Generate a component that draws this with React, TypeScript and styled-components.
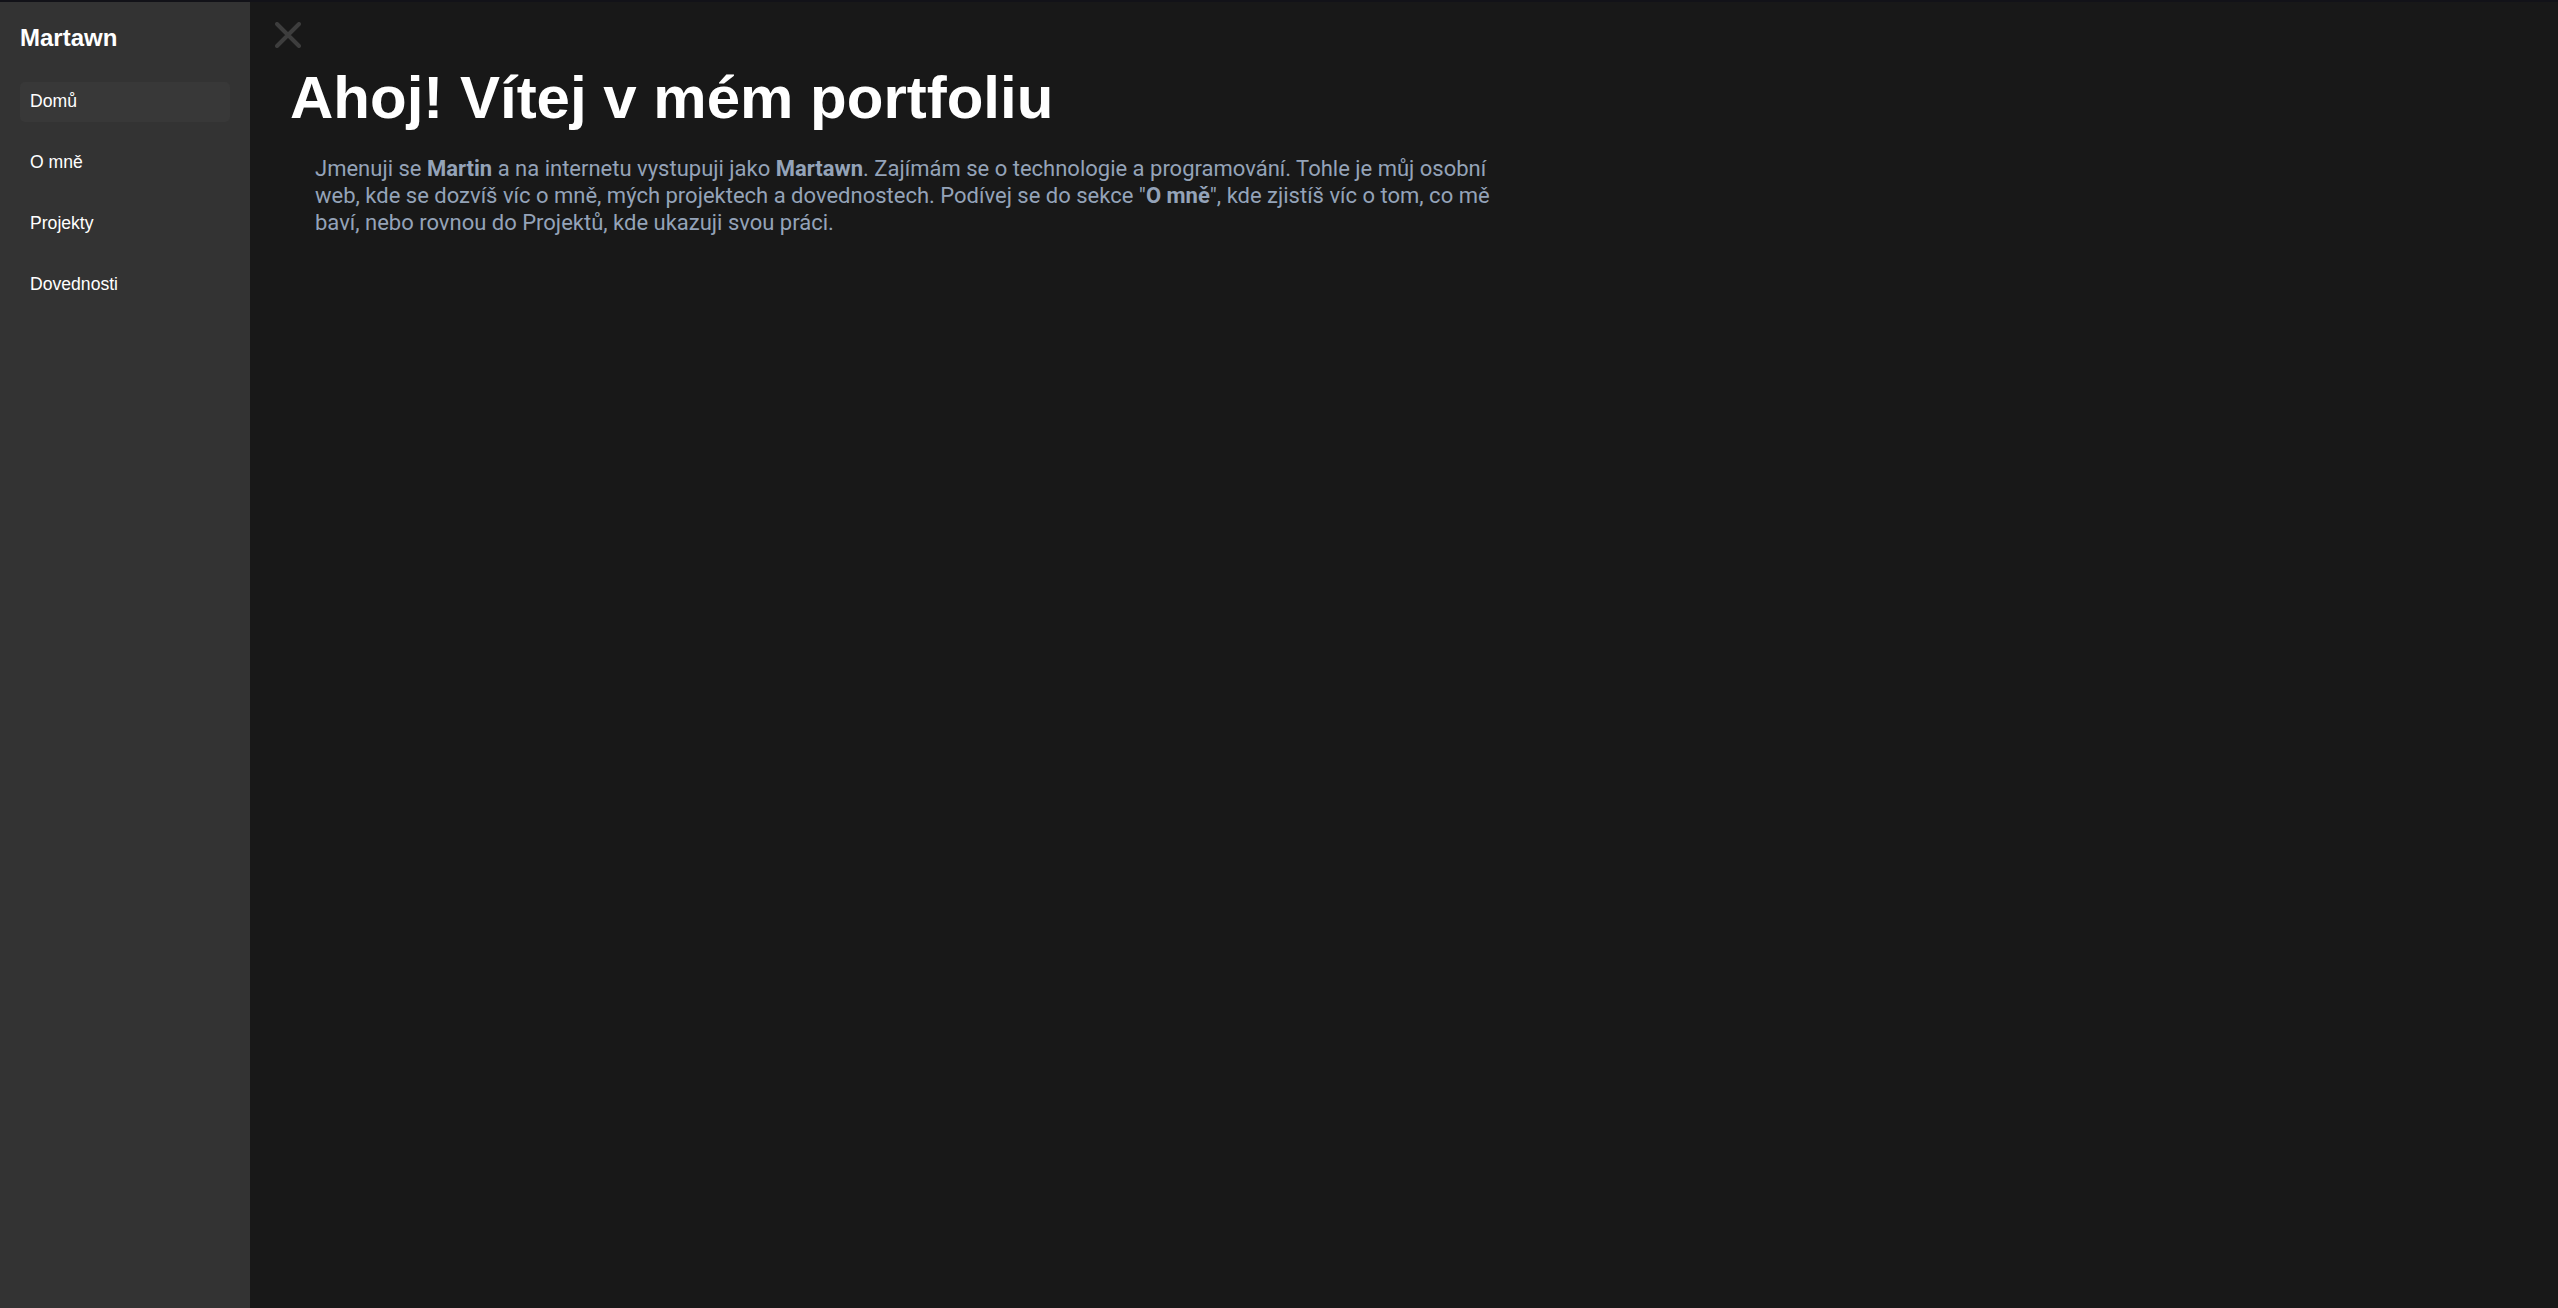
import React from "react";
import styled, { createGlobalStyle } from "styled-components";

const GlobalStyle = createGlobalStyle`
  html, body {
    margin: 0;
    padding: 0;
    background: #181818;
  }
  body {
    border-top: 2px solid #121218;
    font-family: "Liberation Sans", Arial, sans-serif;
  }
  * { box-sizing: border-box; }
`;

const Layout = styled.div`
  display: flex;
  min-height: calc(100vh - 2px);
`;

const Sidebar = styled.aside`
  width: 250px;
  flex-shrink: 0;
  background: #333333;
  padding: 22px 20px 20px;
  display: flex;
  flex-direction: column;
`;

const Brand = styled.div`
  color: #ffffff;
  font-family: "Liberation Sans", Arial, sans-serif;
  font-weight: 700;
  font-size: 24px;
  line-height: 28.8px;
  margin: 0 0 29px 0;
`;

const Nav = styled.nav`
  display: flex;
  flex-direction: column;
  gap: 21px;
`;

const NavItem = styled.a<{ $active?: boolean }>`
  display: flex;
  align-items: center;
  height: 40px;
  padding: 0 10px;
  border-radius: 5px;
  color: #ffffff;
  text-decoration: none;
  font-family: "Liberation Sans", Arial, sans-serif;
  font-size: 17.6px;
  background: ${(p) => (p.$active ? "#383838" : "transparent")};
  cursor: pointer;
`;

const Main = styled.main`
  flex: 1;
  padding: 20px 40px 40px 25px;
`;

const CloseButton = styled.button`
  display: block;
  width: 26px;
  height: 26px;
  padding: 0;
  border: none;
  background: none;
  cursor: pointer;
  svg { display: block; }
`;

const Content = styled.section`
  padding-left: 15px;
`;

const Title = styled.h1`
  margin: 14px 0 0 0;
  color: #ffffff;
  font-family: "Liberation Sans", Arial, sans-serif;
  font-weight: 700;
  font-size: 60px;
  line-height: 72px;
`;

const Intro = styled.p`
  margin: 21px 0 0 25px;
  max-width: 1200px;
  color: #94a3b8;
  font-family: Roboto, "Noto Sans", sans-serif;
  font-size: 22px;
  line-height: 27px;
  b { font-weight: 700; }
`;

export default function App() {
  const items = ["Domů", "O mně", "Projekty", "Dovednosti"];
  return (
    <>
      <GlobalStyle />
      <Layout>
        <Sidebar>
          <Brand>Martawn</Brand>
          <Nav>
            {items.map((it, i) => (
              <NavItem key={it} $active={i === 0}>
                {it}
              </NavItem>
            ))}
          </Nav>
        </Sidebar>
        <Main>
          <CloseButton aria-label="Zavřít">
            <svg width="26" height="26" viewBox="0 0 26 26">
              <path
                d="M2 2 L24 24 M24 2 L2 24"
                stroke="#3d3d3d"
                strokeWidth="4"
                strokeLinecap="round"
                fill="none"
              />
            </svg>
          </CloseButton>
          <Content>
            <Title>Ahoj! Vítej v mém portfoliu</Title>
            <Intro>
              Jmenuji se <b>Martin</b> a na internetu vystupuji jako <b>Martawn</b>. Zajímám se o
              technologie a programování. Tohle je můj osobní web, kde se dozvíš víc o mně, mých
              projektech a dovednostech. Podívej se do sekce "<b>O mně</b>", kde zjistíš víc o tom,
              co mě baví, nebo rovnou do Projektů, kde ukazuji svou práci.
            </Intro>
          </Content>
        </Main>
      </Layout>
    </>
  );
}
